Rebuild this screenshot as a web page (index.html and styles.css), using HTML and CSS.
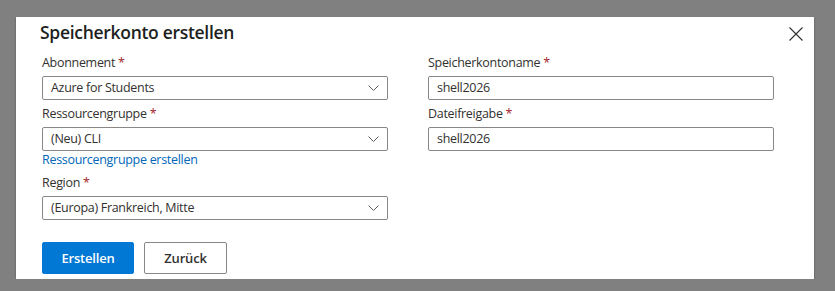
FILE: index.html
```html
<!DOCTYPE html>
<html lang="de">
<head>
  <meta charset="UTF-8">
  <meta name="viewport" content="width=device-width, initial-scale=1.0">
  <title>Speicherkonto erstellen</title>
  <link rel="stylesheet" href="styles.css">
</head>
<body>
  <div class="dialog">
    <div class="dialog-header">
      <h1 class="dialog-title">Speicherkonto erstellen</h1>
      <button class="close-btn" aria-label="Schließen">
        <svg width="14" height="14" viewBox="0 0 14 14">
          <path d="M0.5 0.5 L13.5 13.5 M13.5 0.5 L0.5 13.5" stroke="#323130" stroke-width="1.1" fill="none"/>
        </svg>
      </button>
    </div>

    <div class="form-grid">
      <div class="form-col">
        <div class="field">
          <label class="field-label">Abonnement <span class="req">*</span></label>
          <div class="select-box">
            <span>Azure for Students</span>
            <svg class="chevron" width="11" height="6" viewBox="0 0 11 6"><path d="M0.5 0.5 L5.5 5.5 L10.5 0.5" stroke="#605e5c" fill="none"/></svg>
          </div>
        </div>
        <div class="field">
          <label class="field-label">Ressourcengruppe <span class="req">*</span></label>
          <div class="select-box">
            <span>(Neu) CLI</span>
            <svg class="chevron" width="11" height="6" viewBox="0 0 11 6"><path d="M0.5 0.5 L5.5 5.5 L10.5 0.5" stroke="#605e5c" fill="none"/></svg>
          </div>
          <a class="link" href="#">Ressourcengruppe erstellen</a>
        </div>
        <div class="field">
          <label class="field-label">Region <span class="req">*</span></label>
          <div class="select-box">
            <span>(Europa) Frankreich, Mitte</span>
            <svg class="chevron" width="11" height="6" viewBox="0 0 11 6"><path d="M0.5 0.5 L5.5 5.5 L10.5 0.5" stroke="#605e5c" fill="none"/></svg>
          </div>
        </div>
      </div>

      <div class="form-col">
        <div class="field">
          <label class="field-label">Speicherkontoname <span class="req">*</span></label>
          <div class="text-box">shell2026</div>
        </div>
        <div class="field">
          <label class="field-label">Dateifreigabe <span class="req">*</span></label>
          <div class="text-box">shell2026</div>
        </div>
      </div>
    </div>

    <div class="actions">
      <button class="btn btn-primary">Erstellen</button>
      <button class="btn btn-default">Zurück</button>
    </div>
  </div>
</body>
</html>
```

FILE: styles.css
```css
body {
  margin: 0;
  background-color: #808080;
  font-family: "Open Sans", "Noto Sans", sans-serif;
  color: #323130;
}
.dialog {
  margin: 17px 0 0 16px;
  width: 798px;
  height: 262px;
  box-sizing: border-box;
  background-color: white;
  box-shadow: 0 1px 2px rgba(0, 0, 0, 0.35);
  padding: 1px 0 0 0;
}
.dialog-header {
  display: flex;
  justify-content: space-between;
  align-items: flex-start;
  padding: 0 11px 0 24px;
}
.dialog-title {
  margin: 0;
  font-size: 17.5px;
  line-height: 28px;
  font-weight: 600;
  letter-spacing: -0.3px;
  color: #201f1e;
}
.close-btn {
  border: none;
  background: none;
  padding: 0;
  margin-top: 9px;
  width: 14px;
  height: 14px;
  display: flex;
}
.form-grid {
  display: flex;
  gap: 40px;
  padding: 7px 0 0 26px;
}
.form-col {
  width: 346px;
  display: flex;
  flex-direction: column;
  gap: 4px;
}
.field {
  display: flex;
  flex-direction: column;
}
.field-label {
  font-size: 12.5px;
  line-height: 20px;
  letter-spacing: -0.3px;
  margin-bottom: 3px;
}
.req {
  color: #a4262c;
}
.select-box, .text-box {
  height: 24px;
  box-sizing: border-box;
  border: 1px solid #8a8886;
  border-radius: 2px;
  font-size: 12.5px;
  letter-spacing: -0.3px;
  line-height: 22px;
  padding: 0 8px 0 8px;
  display: flex;
  align-items: center;
  justify-content: space-between;
}
.link {
  color: #0067b8;
  font-size: 12.5px;
  letter-spacing: -0.3px;
  line-height: 20px;
  text-decoration: none;
  margin-top: -1px;
  margin-bottom: -1px;
}
.actions {
  display: flex;
  gap: 10px;
  padding: 22px 0 0 26px;
}
.btn {
  height: 32px;
  box-sizing: border-box;
  border-radius: 2px;
  font-family: inherit;
  font-size: 13px;
  font-weight: 600;
  letter-spacing: -0.2px;
}
.btn-primary {
  width: 92px;
  background-color: #0078d4;
  border: 1px solid #0078d4;
  color: white;
}
.btn-default {
  width: 83px;
  background-color: white;
  border: 1px solid #8a8886;
  color: #323130;
}
```
